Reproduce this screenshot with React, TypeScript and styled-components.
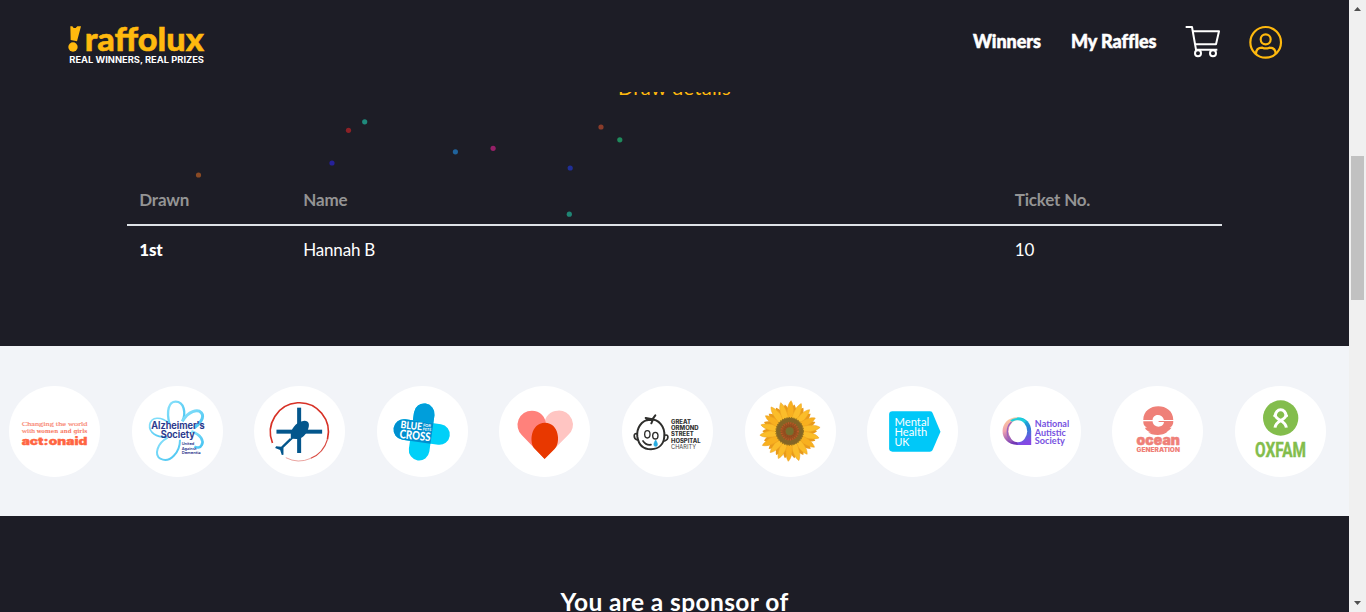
import React from "react";
import styled, { createGlobalStyle } from "styled-components";

const GlobalStyle = createGlobalStyle`
  * { box-sizing: border-box; }
  html, body { margin: 0; padding: 0; overflow: hidden; }
  body { background: #1d1d26; font-family: "Lato", "Liberation Sans", sans-serif; color: #fff; }
`;

const Frame = styled.div`
  display: flex;
  width: 1366px;
  height: 612px;
  overflow: hidden;
`;

const Page = styled.div`
  position: relative;
  display: flex;
  flex-direction: column;
  flex: 1;
  min-width: 0;
  background: #1d1d26;
`;

const Header = styled.header`
  display: flex;
  flex: none;
  height: 92px;
  padding: 25px 66px 0 67px;
  align-items: flex-start;
  justify-content: space-between;
`;

const Nav = styled.nav`
  display: flex;
  align-items: flex-start;
`;

const NavLink = styled.a<{ $width: number }>`
  width: ${(p) => p.$width}px;
  margin-right: 30px;
  padding-top: 5px;
  font-size: 18px;
  line-height: 22px;
  font-weight: 900;
  letter-spacing: -0.08px;
  white-space: nowrap;
  -webkit-text-stroke: 0.5px #fff;
`;

const CartSlot = styled.span`
  display: block;
  width: 35px;
  height: 33px;
  margin-right: 29px;
`;

const UserSlot = styled.span`
  display: block;
  width: 34px;
  height: 34px;
`;

const Results = styled.section`
  flex: none;
  height: 254px;
  overflow: hidden;
  padding: 0 127px;
`;

const Title = styled.h3`
  height: 28px;
  margin: -18px 0 0;
  text-align: center;
  font-size: 20px;
  line-height: 27px;
  font-weight: 400;
  letter-spacing: 0.3px;
  color: #ffb90e;
`;

const Table = styled.div`
  margin-top: 72px;
`;

const Row = styled.div<{ $head?: boolean }>`
  display: grid;
  grid-template-columns: 164px 711.5px 1fr;
  height: ${(p) => (p.$head ? 52 : 46)}px;
  align-items: center;
  font-size: 17px;
  letter-spacing: -0.2px;
  font-weight: ${(p) => (p.$head ? 700 : 400)};
  color: ${(p) => (p.$head ? "#949494" : "#fff")};
  border-bottom: ${(p) => (p.$head ? "2px solid #dee2e6" : "none")};
`;

const Cell = styled.span<{ $strong?: boolean }>`
  padding-left: 12.3px;
  font-weight: ${(p) => (p.$strong ? 900 : "inherit")};
`;

const Charities = styled.section`
  display: flex;
  flex: none;
  height: 170px;
  padding: 0 23px 0 9px;
  align-items: center;
  justify-content: space-between;
  background: #f2f4f8;
`;

const Badge = styled.div`
  width: 91px;
  height: 91px;
  border-radius: 50%;
  background: #fff;
  overflow: hidden;
`;

const Sponsor = styled.section`
  flex: 1;
  padding-top: 70px;
  overflow: hidden;
`;

const SponsorTitle = styled.h2`
  margin: 0;
  text-align: center;
  font-size: 24.5px;
  line-height: 32px;
  font-weight: 700;
  letter-spacing: 0.4px;
  white-space: nowrap;
`;

const Confetti = styled.svg`
  position: absolute;
  inset: 0;
  pointer-events: none;
`;

const Scrollbar = styled.div`
  display: flex;
  flex-direction: column;
  flex: none;
  align-items: center;
  width: 17px;
  background: #f0f0f0;
`;

const ScrollButton = styled.span`
  display: block;
  height: 17px;
  width: 17px;
`;

const Track = styled.div`
  flex: 1;
  padding-top: 139px;
`;

const Thumb = styled.div`
  width: 13px;
  height: 144px;
  background: #c1c1c1;
`;

type TProps = {
  x: number;
  y: number;
  w: number;
  size: number;
  weight?: number;
  fill: string;
  family?: string;
  bold?: number;
  children: string;
};

const Word = ({ x, y, w, size, weight = 400, fill, family = "Lato", bold = 0, children }: TProps) => (
  <text
    x={x}
    y={y}
    textLength={w}
    lengthAdjust="spacingAndGlyphs"
    fontSize={size}
    fontWeight={weight}
    fill={fill}
    stroke={bold ? fill : "none"}
    strokeWidth={bold}
    fontFamily={`"${family}", "Liberation Sans", sans-serif`}
  >
    {children}
  </text>
);

const Logo = () => (
  <svg width="140" height="42" viewBox="51 45 420 126">
    <path d="M61 49 L67 49 L71 54 L77 54 L82 49 L93 49 L81 94 L62 90 Z" fill="#ffb90e" />
    <circle cx="69" cy="111" r="14" fill="#ffb90e" />
    <Word x={104} y={122} w={358} size={99} weight={900} fill="#ffb90e" bold={1.5}>raffolux</Word>
    <Word x={58} y={159} w={404} size={25} weight={700} fill="#fff" family="Inter">REAL WINNERS, REAL PRIZES</Word>
  </svg>
);

const Cart = () => (
  <svg width="35" height="33" viewBox="705 45 105 99" fill="none" stroke="#fff" strokeWidth="6" strokeLinejoin="round">
    <path d="M707 51 H726 L738 119 H802" />
    <path d="M728 64 H807 L798 103 H735" />
    <circle cx="744" cy="130" r="9" />
    <circle cx="789" cy="130" r="9" />
  </svg>
);

const User = () => (
  <svg width="34" height="34" viewBox="896 45 102 102" fill="none" stroke="#ffb90e" strokeWidth="6.5">
    <circle cx="946" cy="97" r="46" />
    <circle cx="946" cy="88" r="15" />
    <path d="M917 132 C917 118 925 113 936 113 C943 116 950 116 957 113 C969 113 976 119 976 132" />
  </svg>
);

const ActionAid = () => (
  <>
    <Word x={65} y={151} w={197} size={20} fill="#f98d7a" family="Liberation Serif" bold={0.6}>Changing the world</Word>
    <Word x={65} y={171} w={40} size={17} fill="#f98d7a" family="Liberation Serif" bold={0.6}>with</Word>
    <Word x={110} y={171} w={152} size={17} weight={700} fill="#f77a66" family="DejaVu Serif">women and girls</Word>
    <Word x={65} y={207} w={197} size={32} weight={900} fill="#ff6542" family="Inter" bold={1}>act:onaid</Word>
  </>
);

const Alzheimers = () => (
  <>
    <defs>
      <linearGradient id="petal" x1="0" y1="0" x2="1" y2="1">
        <stop offset="0" stopColor="#8ce2fb" />
        <stop offset="1" stopColor="#45c3f1" />
      </linearGradient>
    </defs>
    <g fill="none" stroke="url(#petal)" strokeWidth="7">
      <path d="M509 142 C500 105 507 77 528 77 C553 77 560 111 548 136" />
      <path d="M548 136 C566 105 594 98 605 110 C617 124 598 146 584 155" strokeWidth="9" />
      <path d="M509 142 C483 120 455 122 450 146 C447 170 470 184 502 183" strokeWidth="5" />
      <path d="M504 185 C472 202 463 237 482 248 C511 263 541 229 541 191" strokeWidth="6" />
      <path d="M575 166 C605 177 613 195 606 207 C602 216 592 216 584 212" strokeWidth="8" />
    </g>
    <Word x={455} y={160} w={160} size={29} weight={600} fill="#26358b" family="Inter" bold={0.4}>Alzheimer's</Word>
    <Word x={483} y={187} w={102} size={29} weight={600} fill="#26358b" family="Inter" bold={0.4}>Society</Word>
    <Word x={546} y={207} w={38} size={11} weight={600} fill="#26358b" family="Inter">United</Word>
    <Word x={546} y={220.5} w={44} size={11} weight={600} fill="#26358b" family="Inter">Against</Word>
    <Word x={546} y={234} w={57} size={11} weight={600} fill="#26358b" family="Inter">Dementia</Word>
  </>
);

const AirAmbulance = () => (
  <>
    <path d="M98 201 A87 88 0 1 1 263 190" fill="none" stroke="#d73227" strokeWidth="5" />
    <path d="M263 190 A87 88 0 0 1 213 247" fill="none" stroke="#d94b42" strokeWidth="3.5" />
    <path d="M213 247 A87 88 0 0 1 138 245" fill="none" stroke="#e0766f" strokeWidth="2" />
    <g fill="#03568c">
      <rect x="172" y="95" width="12" height="136" />
      <rect x="110" y="161" width="137" height="12" />
      <path d="M153 188 L153 172 C157 153 174 135 194 134 C208 134 210 146 205 159 C199 177 186 189 170 189 L159 188 L131 215 L131 236 L126 237 L121 222 L106 216 L109 211 L124 212 L150 187 Z" />
    </g>
  </>
);

const BlueCross = () => (
  <>
    <g transform="rotate(8 546 168)">
      <rect x="461" y="137" width="170" height="62" rx="31" fill="#00d0f8" />
      <rect x="515" y="82" width="62" height="172" rx="31" fill="#00d0f8" />
      <path d="M515 137 V113 A31 31 0 0 1 577 113 V137 Z" fill="#009edb" />
      <path d="M577 137 V199 H492 A31 31 0 0 1 492 137 Z" fill="#008fcf" />
    </g>
    <g transform="rotate(6 527 166)">
      <Word x={481} y={161} w={65} size={31} weight={900} fill="#fff">BLUE</Word>
      <Word x={548} y={149} w={24} size={12} weight={700} fill="#fff">FOR</Word>
      <Word x={548} y={161} w={26} size={12} weight={700} fill="#fff">PETS</Word>
      <Word x={481} y={191} w={93} size={36} weight={900} fill="#fff">CROSS</Word>
    </g>
  </>
);

const Heart = () => (
  <>
    <path d="M195 248 L265 178 A42 42 0 0 0 234 104 C213 104 194 122 194 146 Z" fill="#ffc5c2" />
    <path d="M195 248 L127 178 A43 43 0 0 1 157 104 C181 104 199 122 199 146 Z" fill="#ff817b" />
    <path d="M195 249 L166 219 C147 201 153 140 196 140 C239 140 244 201 225 219 Z" fill="#e83800" />
  </>
);

const Gosh = () => (
  <>
    <g fill="none" stroke="#2e2e2c" strokeWidth="6" strokeLinecap="round">
      <path d="M510 130 C483 134 469 157 472 182 C476 208 491 220 513 220 C538 219 552 203 553 180 C555 151 537 130 510 130 Z" />
      <path d="M497 126 L517 130 M501 133 L517 130 L526 118 M514 142 L520 128" />
      <path d="M472 174 C460 168 459 188 472 192 M554 178 C566 173 568 190 554 195" strokeWidth="5" />
      <ellipse cx="502" cy="175" rx="8" ry="11" strokeWidth="4" />
      <ellipse cx="526" cy="179" rx="8" ry="10" strokeWidth="4" />
      <path d="M489 195 C495 204 503 208 513 206" strokeWidth="5" />
    </g>
    <path d="M527 192 C533 201 535 211 527 211 C519 211 521 201 527 192 Z" fill="#27ace0" stroke="#27ace0" strokeWidth="2" />
    <Word x={573} y={144} w={60} size={17} weight={800} fill="#333" family="Inter">GREAT</Word>
    <Word x={573} y={163} w={83} size={17} weight={800} fill="#333" family="Inter">ORMOND</Word>
    <Word x={573} y={181} w={68} size={17} weight={800} fill="#333" family="Inter">STREET</Word>
    <Word x={573} y={200} w={89} size={17} weight={800} fill="#333" family="Inter">HOSPITAL</Word>
    <Word x={573} y={219} w={75} size={17} fill="#444" family="Inter">CHARITY</Word>
  </>
);

const petals = Array.from({ length: 18 }, (_, i) => i);

const Sunflower = () => (
  <g transform="translate(209 166)">
    {petals.map((i) => (
      <path key={`back-${i}`} d="M-11 -30 C-13 -60 -7 -74 0 -82 C7 -74 13 -60 11 -30 Z" fill="#e89a1c" transform={`rotate(${i * 20 + 10})`} />
    ))}
    {petals.map((i) => (
      <path
        key={i}
        d="M-8 -30 C-13 -62 -8 -82 1 -92 C8 -82 13 -62 8 -30 Z"
        fill={i % 3 ? "#fbbd2a" : "#f8b01f"}
        stroke="#eda220"
        strokeWidth="1.5"
        transform={`rotate(${i * 20 + 2}) scale(${1 - (i % 4) * 0.02})`}
      />
    ))}
    <circle r="41" fill="#836526" stroke="#97751f" strokeWidth="4" strokeDasharray="4 3" />
    <circle r="27" fill="#98501f" />
    <circle r="25" fill="none" stroke="#b85b28" strokeWidth="6" strokeDasharray="3 4" />
    <circle r="16" fill="none" stroke="#8a4a20" strokeWidth="4" strokeDasharray="3 3" />
    <circle r="12" fill="#75702f" />
  </g>
);

const MentalHealth = () => (
  <>
    <path d="M518 106 H630 Q636 106 638 110 L662 167 L638 223 Q636 227 630 227 H518 Q508 227 508 217 V116 Q508 106 518 106 Z" fill="#00c8f8" />
    <Word x={524} y={150} w={104} size={34} fill="#fff">Mental</Word>
    <Word x={524} y={180} w={98} size={34} fill="#fff">Health</Word>
    <Word x={524} y={210} w={45} size={34} fill="#fff">UK</Word>
  </>
);

const Autistic = () => (
  <>
    <defs>
      <linearGradient id="ringLeft" x1="0.3" y1="0" x2="0.5" y2="1">
        <stop offset="0" stopColor="#ffd19c" />
        <stop offset="0.45" stopColor="#efa0b0" />
        <stop offset="1" stopColor="#6f35b5" />
      </linearGradient>
      <linearGradient id="ringRight" x1="0" y1="0" x2="0.2" y2="1">
        <stop offset="0" stopColor="#12d5dc" />
        <stop offset="0.5" stopColor="#2585d5" />
        <stop offset="1" stopColor="#8448e4" />
      </linearGradient>
    </defs>
    <path d="M170 124 H172 C198 124 213 143 213 166 V207 H170 Z" fill="url(#ringRight)" />
    <path d="M172 124 C112 124 112 207 172 207 Z" fill="url(#ringLeft)" />
    <path d="M150 134 C160 124 185 122 198 136 L192 140 C180 132 166 132 156 137 Z" fill="#1fd0dc" />
    <ellipse cx="173" cy="166" rx="28" ry="33" fill="#fff" />
    <path d="M154 138 C136 153 138 185 154 196" fill="none" stroke="#9a63bd" strokeWidth="4" />
    <Word x={224} y={154} w={103} size={27} weight={700} fill="#7651df">National</Word>
    <Word x={224} y={180} w={93} size={27} weight={700} fill="#7651df">Autistic</Word>
    <Word x={224} y={205} w={90} size={27} weight={700} fill="#7651df">Society</Word>
  </>
);

const Ocean = () => (
  <>
    <path d="M551 132 C551 77 641 77 641 132 H613 C609 112 580 112 579 132 Z" fill="#ef8078" />
    <path d="M551 136 H579 C580 157 612 157 613 138 H597 V135 H641 C642 145 637 153 630 155 H636 C631 161 627 165 620 166 H625 C618 173 612 176 595 177 C580 177 571 174 566 169 H574 C563 165 558 161 556 155 H562 C553 150 551 145 551 136 Z" fill="#ef8078" />
    <Word x={531} y={208} w={130} size={41} weight={900} fill="#ef8078" family="Inter" bold={1.5}>ocean</Word>
    <Word x={531} y={227} w={130} size={18} weight={900} fill="#ef8078" family="Inter">GENERATION</Word>
  </>
);

const Oxfam = () => (
  <>
    <circle cx="242" cy="234" r="53" fill="#83bd4c" />
    <g fill="none" stroke="#fff" strokeWidth="9">
      <path d="M226 227 A16 18 0 1 1 258 227" />
      <path d="M220 227 H230 M254 227 H264" strokeWidth="6" />
      <path d="M226 226 C228 241 258 242 259 263 M258 226 C256 241 226 242 225 263" />
    </g>
    <Word x={165} y={352} w={153} size={58} weight={700} fill="#83bd4c" family="Roboto" bold={1.2}>OXFAM</Word>
  </>
);

const charities: { name: string; box: string; art: React.FC }[] = [
  { name: "ActionAid", box: "27 30 273 273", art: ActionAid },
  { name: "Alzheimer's Society", box: "397 30 273 273", art: Alzheimers },
  { name: "Air Ambulance", box: "42.6 30 273 273", art: AirAmbulance },
  { name: "Blue Cross", box: "412 30 273 273", art: BlueCross },
  { name: "British Heart", box: "58.2 30 273 273", art: Heart },
  { name: "Great Ormond Street", box: "426 30 273 273", art: Gosh },
  { name: "Sunflower", box: "75 30 273 273", art: Sunflower },
  { name: "Mental Health UK", box: "441.6 30 273 273", art: MentalHealth },
  { name: "National Autistic Society", box: "89.4 30 273 273", art: Autistic },
  { name: "Ocean Generation", box: "457.2 30 273 273", art: Ocean },
  { name: "Oxfam", box: "105 138 273 273", art: Oxfam },
];

const dots: [number, number, string][] = [
  [198.5, 175, "#8a4a24"],
  [332, 163, "#26219a"],
  [348.5, 130.3, "#8c2126"],
  [364.7, 121.8, "#1f8a7c"],
  [455.4, 151.8, "#20639c"],
  [493.1, 148.3, "#962068"],
  [601, 127, "#8a3c2a"],
  [619.8, 139.8, "#1f8a5c"],
  [570.2, 168, "#202f96"],
  [569.3, 214.2, "#1f8574"],
];

export default function App() {
  return (
    <Frame>
      <GlobalStyle />
      <Page>
        <Header>
          <Logo />
          <Nav>
            <NavLink $width={68}>Winners</NavLink>
            <NavLink $width={84}>My Raffles</NavLink>
            <CartSlot><Cart /></CartSlot>
            <UserSlot><User /></UserSlot>
          </Nav>
        </Header>
        <Results>
          <Title>Draw details</Title>
          <Table>
            <Row $head>
              <Cell>Drawn</Cell>
              <Cell>Name</Cell>
              <Cell>Ticket No.</Cell>
            </Row>
            <Row>
              <Cell $strong>1st</Cell>
              <Cell>Hannah B</Cell>
              <Cell>10</Cell>
            </Row>
          </Table>
        </Results>
        <Charities>
          {charities.map(({ name, box, art: Art }) => (
            <Badge key={name}>
              <svg width="91" height="91" viewBox={box}><Art /></svg>
            </Badge>
          ))}
        </Charities>
        <Sponsor>
          <SponsorTitle>You are a sponsor of</SponsorTitle>
        </Sponsor>
        <Confetti width="1349" height="346">
          {dots.map(([x, y, color]) => (
            <circle key={`${x}-${y}`} cx={x} cy={y} r="2.6" fill={color} />
          ))}
        </Confetti>
      </Page>
      <Scrollbar>
        <ScrollButton>
          <svg width="17" height="17"><path d="M5 11 L8.5 7 L12 11 Z" fill="#505050" /></svg>
        </ScrollButton>
        <Track><Thumb /></Track>
        <ScrollButton>
          <svg width="17" height="17"><path d="M5 6 L8.5 10 L12 6 Z" fill="#505050" /></svg>
        </ScrollButton>
      </Scrollbar>
    </Frame>
  );
}
